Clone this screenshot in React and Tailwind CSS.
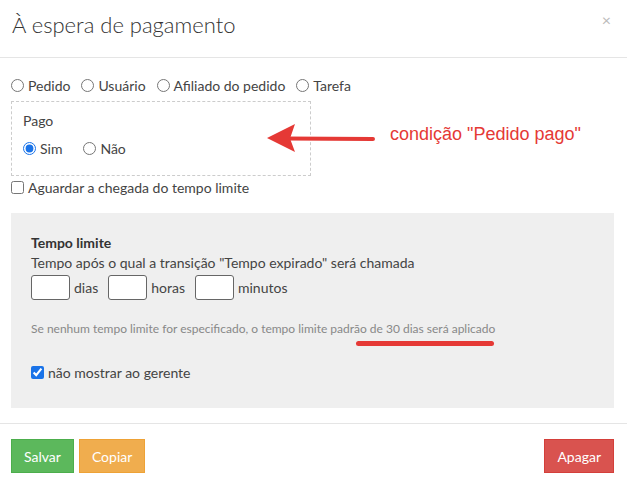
import React from "react";

function Radio({ label, checked, gap = "mr-[11px]" }) {
  return (
    <label className={`flex items-center gap-[4px] ${gap}`}>
      <input type="radio" defaultChecked={checked} name="x" className="m-0 w-[13px] h-[13px] accent-[#1a73e8]" />
      <span>{label}</span>
    </label>
  );
}

function TimeInput({ label }) {
  return (
    <div className="flex items-center">
      <input className="w-[39px] h-[25px] bg-white border border-[#666] rounded-[3px]" />
      <span className="ml-[4px] mr-[10px]">{label}</span>
    </div>
  );
}

export default function App() {
  return (
    <div className="relative w-[627px] h-[485px] bg-white text-[#444] text-[14px] font-['Lato',sans-serif] overflow-hidden">
      <header className="h-[58px] border-b border-[#e5e5e5] flex items-center justify-between pl-[12px] pr-[16px]">
        <h1 className="text-[22px] font-light text-[#333] -mt-[9px]">À espera de pagamento</h1>
        <span className="text-[#bbb] text-[16px] -mt-[18px]">×</span>
      </header>

      <div className="pl-[11px] pr-[12px] pt-[18px]">
        <div className="flex items-center h-[18px]">
          <Radio label="Pedido" checked />
          <Radio label="Usuário" />
          <Radio label="Afiliado do pedido" />
          <Radio label="Tarefa" />
        </div>
        <div className="mt-[7px] w-[300px] h-[75px] border border-dashed border-[#ccc] px-[11px] pt-[9px]">
          <div className="h-[20px] leading-[20px]">Pago</div>
          <div className="mt-[7px] flex items-center h-[20px]">
            <Radio label="Sim" checked gap="mr-[21px]" />
            <Radio label="Não" />
          </div>
        </div>
        <label className="flex items-center gap-[4px] h-[22px]">
          <input type="checkbox" className="m-0 w-[13px] h-[13px]" />
          <span>Aguardar a chegada do tempo limite</span>
        </label>

        <div className="mt-[15px] w-[603px] h-[195px] bg-[#efefef] px-[20px] pt-[21px]">
          <div className="font-bold text-[#333] h-[18px] leading-[18px]">Tempo limite</div>
          <div className="h-[20px] leading-[20px] mt-[1px]">Tempo após o qual a transição "Tempo expirado" será chamada</div>
          <div className="flex items-center mt-[2px]">
            <TimeInput label="dias" />
            <TimeInput label="horas" />
            <TimeInput label="minutos" />
          </div>
          <div className="mt-[21px] text-[12px] text-[#888] h-[16px] leading-[16px]">
            Se nenhum tempo limite for especificado, o tempo limite padrão de 30 dias será aplicado
          </div>
          <label className="flex items-center gap-[4px] mt-[26px] h-[18px]">
            <input type="checkbox" defaultChecked className="m-0 w-[13px] h-[13px] accent-[#1a73e8]" />
            <span>não mostrar ao gerente</span>
          </label>
        </div>
      </div>

      <div className="mt-[15px] border-t border-[#e5e5e5] pl-[11px] pr-[13px] pt-[15px] flex items-center">
        <button className="h-[34px] px-[12px] bg-[#5cb85c] border border-[#4cae4c] text-white">Salvar</button>
        <button className="ml-[5px] h-[34px] px-[12px] bg-[#f0ad4e] border border-[#eea236] text-white">Copiar</button>
        <button className="ml-auto h-[34px] px-[12px] bg-[#d9534f] border border-[#d43f3a] text-white">Apagar</button>
      </div>

      <svg className="absolute left-[262px] top-[120px]" width="120" height="40" viewBox="262 120 120 40">
        <line x1="285" y1="138.5" x2="373" y2="139" stroke="#e53935" strokeWidth="4" strokeLinecap="round" />
        <polygon points="267,138 295,124 290,138.5 295,152" fill="#e53935" />
      </svg>
      <span className="absolute left-[390px] top-[121px] text-[18px] text-[#e53935] font-['Liberation_Sans',Arial,sans-serif]">
        condição "Pedido pago"
      </span>
      <div className="absolute left-[356px] top-[341px] w-[138px] h-[5px] rounded-full bg-[#e53935]" />
    </div>
  );
}
